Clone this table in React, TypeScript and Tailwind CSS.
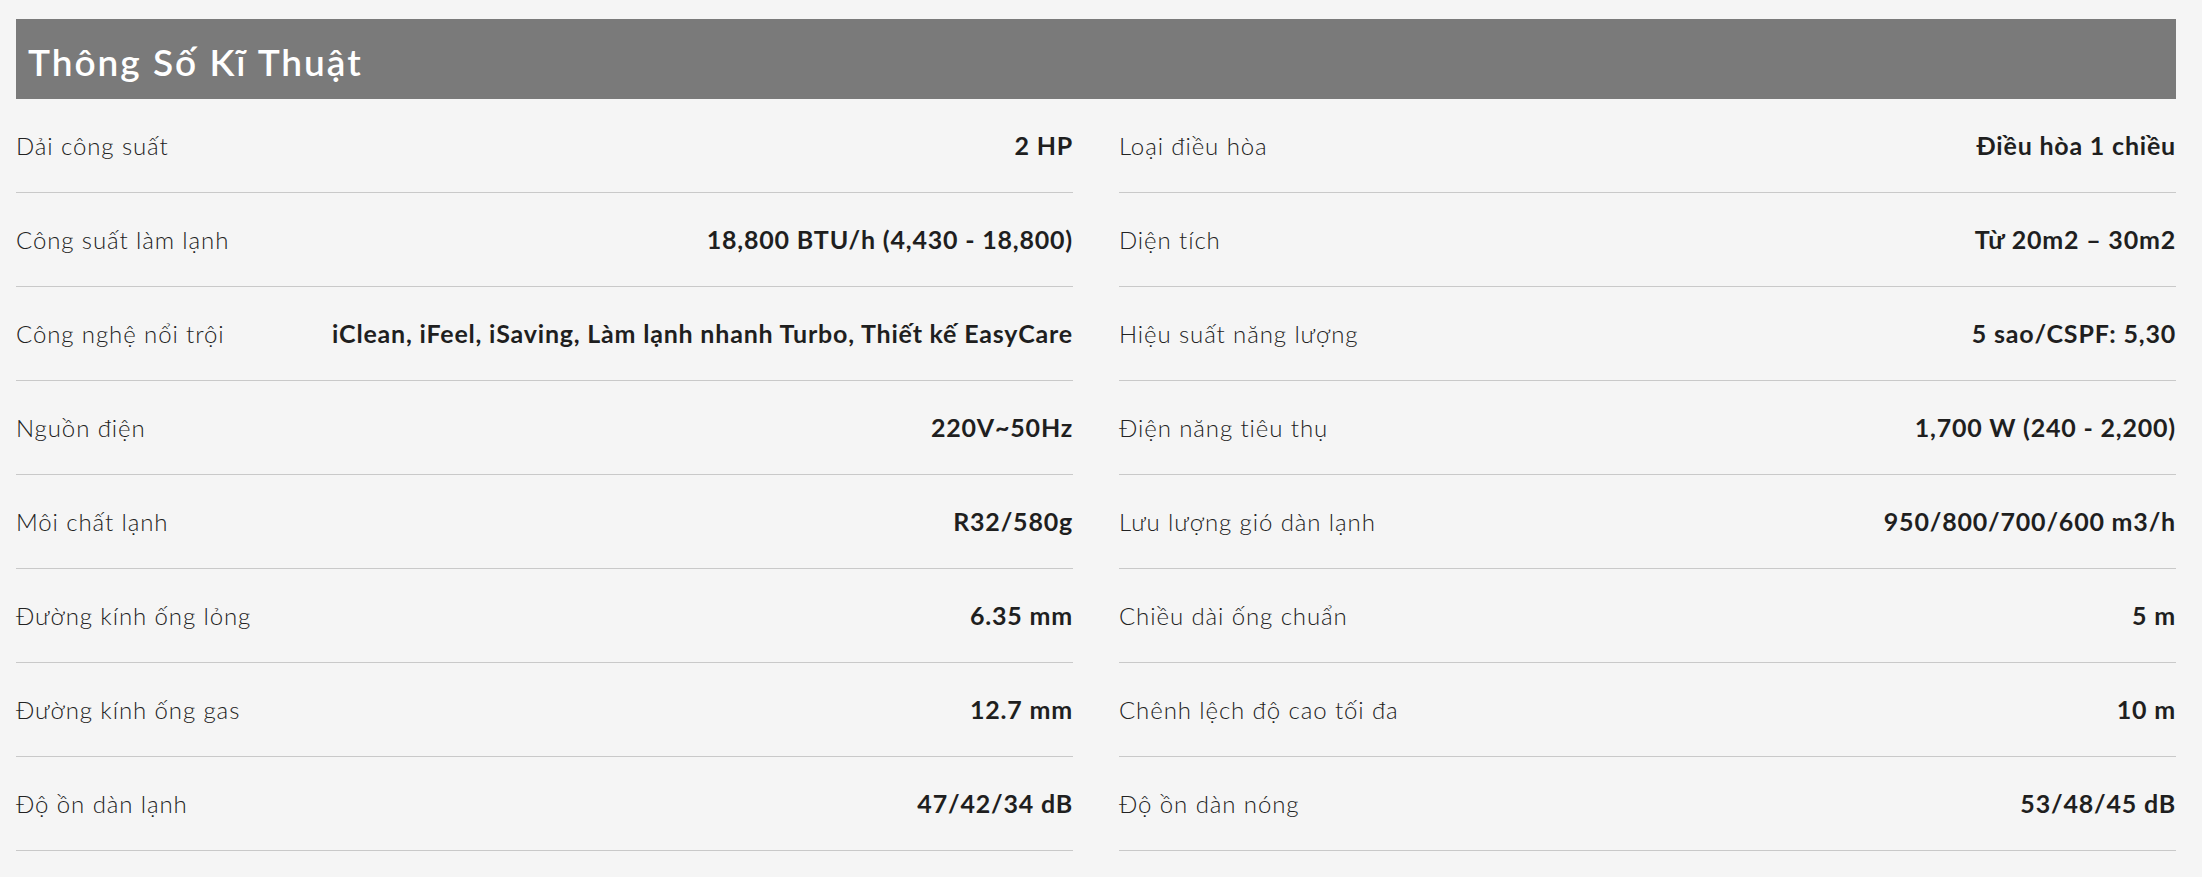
import React from 'react'

type Spec = { label: string; value: string }

const leftSpecs: Spec[] = [
  { label: 'Dải công suất', value: '2 HP' },
  { label: 'Công suất làm lạnh', value: '18,800 BTU/h (4,430 - 18,800)' },
  { label: 'Công nghệ nổi trội', value: 'iClean, iFeel, iSaving, Làm lạnh nhanh Turbo, Thiết kế EasyCare' },
  { label: 'Nguồn điện', value: '220V~50Hz' },
  { label: 'Môi chất lạnh', value: 'R32/580g' },
  { label: 'Đường kính ống lỏng', value: '6.35 mm' },
  { label: 'Đường kính ống gas', value: '12.7 mm' },
  { label: 'Độ ồn dàn lạnh', value: '47/42/34 dB' },
]

const rightSpecs: Spec[] = [
  { label: 'Loại điều hòa', value: 'Điều hòa 1 chiều' },
  { label: 'Diện tích', value: 'Từ 20m2 – 30m2' },
  { label: 'Hiệu suất năng lượng', value: '5 sao/CSPF: 5,30' },
  { label: 'Điện năng tiêu thụ', value: '1,700 W (240 - 2,200)' },
  { label: 'Lưu lượng gió dàn lạnh', value: '950/800/700/600 m3/h' },
  { label: 'Chiều dài ống chuẩn', value: '5 m' },
  { label: 'Chênh lệch độ cao tối đa', value: '10 m' },
  { label: 'Độ ồn dàn nóng', value: '53/48/45 dB' },
]

const SpecRow: React.FC<Spec> = ({ label, value }) => (
  <div className="flex h-[94px] items-center justify-between border-b border-[#c9c9c9]">
    <span className="text-[24px] font-light tracking-[0.9px] text-[#222]">{label}</span>
    <span className="text-[25px] font-bold tracking-[0.8px] text-[#1f1f1f]">{value}</span>
  </div>
)

export default function App() {
  return (
    <div className="min-h-[877px] w-full bg-[#f5f5f5] pl-[16px] pt-[19px] font-['Lato','Noto_Sans',sans-serif]">
      <div className="w-[2160px]">
        <div className="flex h-[80px] items-center bg-[#7a7a7a] px-[12px] pt-[6px]">
          <h2 className="text-[37px] font-semibold tracking-[2px] text-white">Thông Số Kĩ Thuật</h2>
        </div>
        <div className="grid grid-cols-2 gap-x-[46px]">
          <div className="flex flex-col">
            {leftSpecs.map((s) => (
              <SpecRow key={s.label} {...s} />
            ))}
          </div>
          <div className="flex flex-col">
            {rightSpecs.map((s) => (
              <SpecRow key={s.label} {...s} />
            ))}
          </div>
        </div>
      </div>
    </div>
  )
}
